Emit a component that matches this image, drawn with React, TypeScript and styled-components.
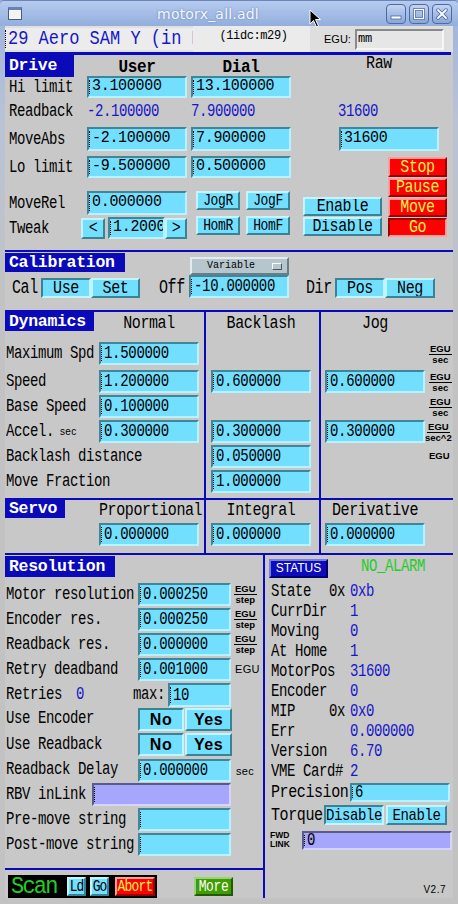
import React from "react";
import styled, { createGlobalStyle } from "styled-components";

const MONO = `"Liberation Mono", "DejaVu Sans Mono", monospace`;
const SANS = `"Liberation Sans", "DejaVu Sans", sans-serif`;
const BG = "#c8c8c8";
const CYAN = "#73dfff";
const BLUE = "#0a0ab8";
const TEXTBLUE = "#1616c8";

const GlobalStyle = createGlobalStyle`
  html, body { margin: 0; padding: 0; background: ${BG}; }
  body { width: 458px; height: 904px; overflow: hidden; }
`;

const Window = styled.div`
  width: 458px;
  height: 904px;
  display: flex;
  flex-direction: column;
  overflow: hidden;
  background: linear-gradient(to bottom, #9cb3de 0px, #b9c3d6 120px, #c2c2c2 300px);
  font-family: ${MONO};
`;

const TitleBar = styled.div`
  position: relative;
  height: 26px;
  flex: none;
  display: flex;
  align-items: center;
  box-sizing: border-box;
  border-top: 1px solid #6c86b8;
  border-radius: 4px 4px 0 0;
  background: linear-gradient(to bottom, #b6cbef, #93aedd);
`;

const WinIcon = styled.div`
  width: 12px;
  height: 9px;
  margin-left: 8px;
  flex: none;
  background: #f4f4f4;
  border: 1px solid #4a5c80;
  border-top-width: 3px;
  border-top-color: #6a82b4;
`;

const Title = styled.div`
  flex: 1;
  padding-left: 8px;
  text-align: center;
  color: #f6f8ff;
  font: 14px "DejaVu Sans", ${SANS};
  text-shadow: 0 0 2px #5a76aa;
  letter-spacing: 0.2px;
`;

const TitleButtons = styled.div`
  display: flex;
  gap: 3px;
  margin-right: 6px;
`;

const TitleBtn = styled.div`
  width: 18px;
  height: 18px;
  border: 1px solid #4f6aa0;
  border-radius: 4px;
  background: linear-gradient(to bottom, #c4d4f2, #8aa6d8);
  display: flex;
  align-items: center;
  justify-content: center;
`;

const Cursor = styled.svg`
  position: absolute;
  left: 309px;
  top: 8px;
`;

const Body = styled.div`
  flex: 1;
  display: flex;
  padding: 0 5px 6px 5px;
`;

const Content = styled.div`
  flex: 1;
  display: flex;
  flex-direction: column;
  background: ${BG};
  overflow: hidden;
`;

/* ---------- generic parts ---------- */

const Stretch = styled.span<{ sy: number }>`
  display: inline-block;
  transform: scaleY(${(p) => p.sy});
`;

const Rule = styled.div<{ h: number; mr?: number }>`
  height: ${(p) => p.h}px;
  margin-right: ${(p) => p.mr ?? 0}px;
  background: ${BLUE};
  flex: none;
`;

const Row = styled.div<{ h: number; align?: string; mt?: number }>`
  display: flex;
  align-items: ${(p) => p.align ?? "center"};
  height: ${(p) => p.h}px;
  margin-top: ${(p) => p.mt ?? 0}px;
  flex: none;
`;

const Label = styled.div<{ w?: number; pl?: number; ml?: number; fs?: number; sy?: number }>`
  width: ${(p) => (p.w ? `${p.w}px` : "auto")};
  padding-left: ${(p) => p.pl ?? 0}px;
  margin-left: ${(p) => p.ml ?? 0}px;
  box-sizing: border-box;
  flex: none;
  font-family: ${MONO};
  font-size: ${(p) => p.fs ?? 14}px;
  letter-spacing: -0.4px;
  white-space: nowrap;
  color: #000;
  transform: scaleY(${(p) => p.sy ?? 1.3});
`;

const Value = styled(Label)`
  color: ${TEXTBLUE};
`;

const Tag = styled.div<{ w: number; h: number; mt?: number }>`
  width: ${(p) => p.w}px;
  height: ${(p) => p.h}px;
  margin-top: ${(p) => p.mt ?? 0}px;
  flex: none;
  box-sizing: border-box;
  padding-left: 4px;
  background: ${BLUE};
  color: #fff;
  font: bold 16.5px ${MONO};
  line-height: ${(p) => p.h}px;
  letter-spacing: -0.3px;
  position: relative;
  z-index: 1;
`;

const ColHead = styled.div<{ w: number; ml?: number; bold?: boolean; pt?: number }>`
  width: ${(p) => p.w}px;
  margin-left: ${(p) => p.ml ?? 0}px;
  padding-top: ${(p) => p.pt ?? 0}px;
  flex: none;
  text-align: center;
  font-family: ${MONO};
  font-size: ${(p) => (p.bold ? 16 : 15)}px;
  font-weight: ${(p) => (p.bold ? "bold" : "normal")};
  letter-spacing: -0.4px;
  white-space: nowrap;
  transform: scaleY(${(p) => (p.bold ? 1.1 : 1.25)});
`;

type FieldProps = {
  w: number;
  h?: number;
  fs?: number;
  purple?: boolean;
  ml?: number;
  mt?: number;
};

const FieldBox = styled.div<FieldProps>`
  position: relative;
  box-sizing: border-box;
  width: ${(p) => p.w}px;
  height: ${(p) => p.h ?? 23}px;
  margin-left: ${(p) => p.ml ?? 0}px;
  margin-top: ${(p) => p.mt ?? 0}px;
  flex: none;
  background: ${(p) => (p.purple ? "#a6a6fc" : CYAN)};
  border-style: solid;
  border-width: 2px;
  border-color: ${(p) =>
    p.purple
      ? "#5a5a8e #d4d4ff #d4d4ff #5a5a8e"
      : "#3e8698 #b8f1ff #b8f1ff #3e8698"};
  font-family: ${MONO};
  font-size: ${(p) => p.fs ?? 14}px;
  letter-spacing: -0.3px;
  line-height: ${(p) => (p.h ?? 23) - 4}px;
  padding-left: 3px;
  color: #000;
  white-space: nowrap;
  overflow: hidden;
  &::before {
    content: "";
    position: absolute;
    left: 0;
    top: 2px;
    bottom: 2px;
    border-left: 1px dotted #000;
  }
`;

const Field = ({
  children,
  sy = 1.28,
  ...rest
}: FieldProps & { children?: React.ReactNode; sy?: number }) => (
  <FieldBox {...rest}>
    <Stretch sy={sy}>{children}</Stretch>
  </FieldBox>
);

type Tone = "cyan" | "red" | "green";
const tones: Record<Tone, { bg: string; light: string; dark: string; fg: string }> = {
  cyan: { bg: CYAN, light: "#c2f5ff", dark: "#3a8296", fg: "#000" },
  red: { bg: "#fd0000", light: "#ff9c9c", dark: "#9c0000", fg: "#fbf34a" },
  green: { bg: "#3f9d00", light: "#98d37a", dark: "#215a00", fg: "#fff" },
};

type BtnProps = {
  w: number;
  h: number;
  tone?: Tone;
  pressed?: boolean;
  ml?: number;
  mt?: number;
  fs?: number;
  heavy?: boolean;
  ls?: number;
};

const BtnBox = styled.div<BtnProps>`
  width: ${(p) => p.w}px;
  height: ${(p) => p.h}px;
  margin-left: ${(p) => p.ml ?? 0}px;
  margin-top: ${(p) => p.mt ?? 0}px;
  flex: none;
  box-sizing: border-box;
  display: flex;
  align-items: center;
  justify-content: center;
  background: ${(p) => tones[p.tone ?? "cyan"].bg};
  color: ${(p) => tones[p.tone ?? "cyan"].fg};
  border: 2px solid;
  border-color: ${(p) => {
    const t = tones[p.tone ?? "cyan"];
    return p.pressed
      ? `${t.dark} ${t.light} ${t.light} ${t.dark}`
      : `${t.light} ${t.dark} ${t.dark} ${t.light}`;
  }};
  font-family: ${(p) => (p.heavy ? SANS : MONO)};
  font-weight: ${(p) => (p.heavy ? "bold" : "normal")};
  font-size: ${(p) => p.fs ?? 14}px;
  letter-spacing: ${(p) => (p.ls !== undefined ? `${p.ls}px` : p.heavy ? "0.5px" : "-0.4px")};
  white-space: nowrap;
  overflow: hidden;
`;

const Btn = ({ children, ...rest }: BtnProps & { children?: React.ReactNode }) => (
  <BtnBox {...rest}>
    <Stretch sy={rest.heavy ? 1 : 1.2}>{children}</Stretch>
  </BtnBox>
);

const Frac = styled.div<{ ml?: number; mt?: number }>`
  display: inline-flex;
  flex-direction: column;
  align-items: center;
  margin-left: ${(p) => p.ml ?? 0}px;
  margin-top: ${(p) => p.mt ?? 0}px;
  font: bold 9.5px ${SANS};
  line-height: 8px;
  flex: none;
`;

const FracTop = styled.span`
  border-bottom: 1px solid #000;
  padding: 0 1px 1px;
  margin-bottom: 1px;
`;

const Small = styled.span<{ ml?: number }>`
  margin-left: ${(p) => p.ml ?? 0}px;
  font: 10px ${SANS};
  letter-spacing: 0.3px;
  display: inline-block;
  transform: scaleY(0.8);
`;

const UnitText = styled.span<{ ml?: number; mt?: number }>`
  margin-left: ${(p) => p.ml ?? 0}px;
  margin-top: ${(p) => p.mt ?? 0}px;
  font: 11px ${SANS};
  letter-spacing: 0.3px;
  flex: none;
`;

const Unit = ({ top, bottom, ml, mt }: { top: string; bottom: string; ml?: number; mt?: number }) => (
  <Frac ml={ml} mt={mt}>
    <FracTop>{top}</FracTop>
    <span>{bottom}</span>
  </Frac>
);

/* ---------- top row ---------- */

const TopRow = styled.div`
  height: 26px;
  flex: none;
  display: flex;
  background: #e0e0e0;
`;

const NameField = styled.div`
  position: relative;
  width: 188px;
  height: 22px;
  margin-top: 2px;
  box-sizing: border-box;
  padding-left: 3px;
  background: #ececec;
  color: ${TEXTBLUE};
  font: 17px ${MONO};
  line-height: 22px;
  white-space: pre;
  overflow: hidden;
  &::before {
    content: "";
    position: absolute;
    left: 0;
    top: 2px;
    bottom: 2px;
    border-left: 1px dotted #000;
  }
`;

const PvBox = styled.div`
  width: 117px;
  background: #ebebeb;
  text-align: center;
  padding-top: 3px;
  padding-left: 4px;
  font: 12px ${MONO};
  letter-spacing: -0.4px;
  box-sizing: border-box;
`;

const EguBox = styled.div`
  flex: 1;
  display: flex;
  align-items: center;
  background: #dedede;
  padding-left: 14px;
  font: 11px ${SANS};
`;

const EguField = styled.div`
  width: 89px;
  height: 21px;
  margin-left: 4px;
  box-sizing: border-box;
  border: 2px solid;
  border-color: #8a8a8a #f6f6f6 #f6f6f6 #8a8a8a;
  background: #e6e6e6;
  font: 12px ${MONO};
  line-height: 17px;
  padding-left: 1px;
`;

/* ---------- drive ---------- */

const Section = styled.div<{ h: number }>`
  height: ${(p) => p.h}px;
  flex: none;
  display: flex;
  flex-direction: column;
`;

const Split = styled.div`
  display: flex;
  align-items: flex-start;
`;

const Stack = styled.div<{ w?: number; ml?: number; mt?: number; gap?: number }>`
  display: flex;
  flex-direction: column;
  width: ${(p) => (p.w ? `${p.w}px` : "auto")};
  margin-left: ${(p) => p.ml ?? 0}px;
  margin-top: ${(p) => p.mt ?? 0}px;
  gap: ${(p) => p.gap ?? 0}px;
  flex: none;
`;

const JogGrid = styled.div`
  display: grid;
  grid-template-columns: 44px 44px;
  grid-auto-rows: 19px;
  column-gap: 6px;
  row-gap: 6px;
  margin-left: 6px;
  margin-top: 11px;
`;

const Menu = styled.div`
  position: relative;
  width: 99px;
  height: 18px;
  margin-top: 5px;
  margin-left: 65px;
  box-sizing: border-box;
  background: #b6c6cc;
  border: 2px solid;
  border-color: #e2ecf0 #6a7c84 #6a7c84 #e2ecf0;
  font: 10px ${MONO};
  line-height: 14px;
  padding-left: 15px;
`;

const MenuMark = styled.span`
  position: absolute;
  right: 5px;
  top: 4px;
  width: 8px;
  height: 5px;
  background: #b6c6cc;
  border: 1px solid;
  border-color: #ffffff #4c5a60 #4c5a60 #ffffff;
`;

/* ---------- dynamics / servo ---------- */

const Grid3 = styled.div`
  height: 241px;
  flex: none;
  display: flex;
`;

const Col = styled.div<{ w?: number; line?: boolean }>`
  width: ${(p) => (p.w ? `${p.w}px` : "auto")};
  flex: ${(p) => (p.w ? "none" : "1")};
  min-width: 0;
  display: flex;
  flex-direction: column;
  border-left: ${(p) => (p.line ? `2px solid ${BLUE}` : "none")};
`;

const Cell = styled.div<{ h: number; pl?: number }>`
  height: ${(p) => p.h}px;
  flex: none;
  display: flex;
  align-items: flex-start;
  padding-left: ${(p) => p.pl ?? 0}px;
`;

const ServoPart = styled.div`
  border-top: 2px solid ${BLUE};
  height: 53px;
  display: flex;
  flex-direction: column;
`;

/* ---------- lower ---------- */

const Lower = styled.div`
  flex: 1;
  display: flex;
  min-height: 0;
`;

const LeftPanel = styled.div`
  width: 258px;
  flex: none;
  display: flex;
  flex-direction: column;
  border-right: 2px solid ${BLUE};
`;

const RightPanel = styled.div`
  flex: 1;
  min-width: 0;
  display: flex;
  flex-direction: column;
  padding-left: 4px;
  padding-bottom: 3px;
`;

const StatusBtn = styled.div`
  width: 59px;
  height: 19px;
  margin-top: 4px;
  box-sizing: border-box;
  background: #0c0cbc;
  border: 2px solid;
  border-color: #7a7ae8 #00006a #00006a #7a7ae8;
  color: #fff;
  font: 12px ${SANS};
  text-align: center;
  line-height: 15px;
`;

const Alarm = styled.div`
  margin-left: 33px;
  margin-top: 3px;
  color: #24cc24;
  font: 14px ${MONO};
  letter-spacing: -0.4px;
  transform: scaleY(1.25);
`;

const StatRow = styled.div`
  height: 20px;
  display: flex;
  align-items: center;
  padding-left: 2px;
`;

const TinyTwoLine = styled.div`
  width: 32px;
  font: bold 8.5px ${SANS};
  line-height: 9px;
  padding-left: 1px;
  flex: none;
`;

const Version = styled.div`
  margin-top: auto;
  margin-right: 7px;
  align-self: flex-end;
  font: 10px ${SANS};
  letter-spacing: 0.5px;
`;

const ScanBox = styled.div`
  width: 149px;
  height: 23px;
  margin-left: 3px;
  margin-top: 5px;
  background: #000;
  display: flex;
  align-items: center;
`;

const ScanText = styled.span`
  display: inline-block;
  color: #1fd11f;
  font: 22px ${MONO};
  line-height: 23px;
  height: 23px;
  letter-spacing: -1.8px;
  margin-left: 3px;
  width: 56px;
  flex: none;
  transform: scaleY(1.12);
`;

/* ---------- data ---------- */

const dynRows: {
  label: React.ReactNode;
  h: number;
  normal?: string;
  backlash?: string;
  jog?: string;
  unit?: React.ReactNode;
}[] = [
  { label: "Maximum Spd", h: 28, normal: "1.500000", unit: <Unit top="EGU" bottom="sec" ml={4} mt={3} /> },
  { label: "Speed", h: 25, normal: "1.200000", backlash: "0.600000", jog: "0.600000", unit: <Unit top="EGU" bottom="sec" ml={4} mt={3} /> },
  { label: "Base Speed", h: 25, normal: "0.100000", unit: <Unit top="EGU" bottom="sec" ml={4} mt={3} /> },
  {
    label: (
      <>
        Accel.<Small ml={6}>sec</Small>
      </>
    ),
    h: 25,
    normal: "0.300000",
    backlash: "0.300000",
    jog: "0.300000",
    unit: <Unit top="EGU" bottom="sec^2" ml={0} mt={3} />,
  },
  { label: "Backlash distance", h: 25, backlash: "0.050000", unit: <Frac ml={4} mt={7}>EGU</Frac> },
  { label: "Move Fraction", h: 25, backlash: "1.000000" },
];

const statRows: [string, string, string?][] = [
  ["State", "0xb", "0x"],
  ["CurrDir", "1"],
  ["Moving", "0"],
  ["At Home", "1"],
  ["MotorPos", "31600"],
  ["Encoder", "0"],
  ["MIP", "0x0", "0x"],
  ["Err", "0.000000"],
  ["Version", "6.70"],
  ["VME Card#", "2"],
];

export default function App() {
  return (
    <>
      <GlobalStyle />
      <Window>
        <TitleBar>
          <WinIcon />
          <Title>motorx_all.adl</Title>
          <TitleButtons>
            <TitleBtn>
              <svg width="12" height="12" viewBox="0 0 12 12">
                <rect x="1" y="8" width="10" height="3" fill="#fff" stroke="#4a64a0" strokeWidth="0.8" />
              </svg>
            </TitleBtn>
            <TitleBtn>
              <svg width="12" height="12" viewBox="0 0 12 12">
                <rect x="1.5" y="1.5" width="9" height="9" fill="none" stroke="#4a64a0" strokeWidth="2.6" />
                <rect x="1.5" y="1.5" width="9" height="9" fill="none" stroke="#fff" strokeWidth="1.2" />
              </svg>
            </TitleBtn>
            <TitleBtn>
              <svg width="12" height="12" viewBox="0 0 12 12">
                <path d="M2 2 L10 10 M10 2 L2 10" stroke="#4a64a0" strokeWidth="3.4" strokeLinecap="round" />
                <path d="M2 2 L10 10 M10 2 L2 10" stroke="#fff" strokeWidth="1.8" strokeLinecap="round" />
              </svg>
            </TitleBtn>
          </TitleButtons>
          <Cursor width="14" height="20" viewBox="0 0 14 20">
            <path d="M1 1 L1 15 L4.5 11.5 L7.5 18 L9.5 17 L6.5 10.5 L11.5 10.5 Z" fill="#000" stroke="#fff" strokeWidth="1" />
          </Cursor>
        </TitleBar>

        <Body>
          <Content>
            <TopRow>
              <NameField>
                <Stretch sy={1.15}>29 Aero SAM Y (in M</Stretch>
              </NameField>
              <PvBox>(1idc:m29)</PvBox>
              <EguBox>
                EGU:
                <EguField>mm</EguField>
              </EguBox>
            </TopRow>
            <Rule h={3} mr={2} />

            {/* Drive */}
            <Section h={195}>
              <Row h={20} align="flex-start">
                <Tag w={69} h={22}>Drive</Tag>
                <ColHead w={100} ml={13} bold pt={3}>User</ColHead>
                <ColHead w={100} ml={4} bold pt={3}>Dial</ColHead>
                <ColHead w={80} ml={48} pt={0}>Raw</ColHead>
              </Row>
              <Row h={23}>
                <Label w={82} pl={4}>Hi limit</Label>
                <Field w={100} h={22} fs={15} sy={1.12}>3.100000</Field>
                <Field w={100} h={22} fs={15} sy={1.12} ml={4}>13.100000</Field>
              </Row>
              <Row h={26}>
                <Label w={82} pl={4}>Readback</Label>
                <Value w={104}>-2.100000</Value>
                <Value w={147}>7.900000</Value>
                <Value>31600</Value>
              </Row>
              <Row h={30}>
                <Label w={82} pl={4}>MoveAbs</Label>
                <Field w={100} h={24} fs={15} sy={1.12}>-2.100000</Field>
                <Field w={100} h={24} fs={15} sy={1.12} ml={4}>7.900000</Field>
                <Field w={100} h={24} fs={15} sy={1.12} ml={48}>31600</Field>
              </Row>
              <Split>
                <Stack w={383}>
                  <Row h={26}>
                    <Label w={82} pl={4}>Lo limit</Label>
                    <Field w={100} h={22} fs={15} sy={1.12}>-9.500000</Field>
                    <Field w={100} h={22} fs={15} sy={1.12} ml={4}>0.500000</Field>
                  </Row>
                  <Split>
                    <Stack w={185} mt={9}>
                      <Row h={27} align="flex-start">
                        <Label w={82} pl={4} style={{ marginTop: 6 }}>MoveRel</Label>
                        <Field w={100} h={24} fs={15} sy={1.12} mt={2}>0.000000</Field>
                      </Row>
                      <Row h={24} align="flex-start">
                        <Label w={76} pl={4} style={{ marginTop: 4 }}>Tweak</Label>
                        <Btn w={24} h={21} mt={2} fs={15}>&lt;</Btn>
                        <Field w={57} h={22} fs={15} sy={1.12} mt={1} ml={3}>1.2000</Field>
                        <Btn w={22} h={21} mt={2} fs={15}>&gt;</Btn>
                      </Row>
                    </Stack>
                    <JogGrid>
                      <Btn w={44} h={19} fs={13}>JogR</Btn>
                      <Btn w={44} h={19} fs={13}>JogF</Btn>
                      <Btn w={44} h={19} fs={13}>HomR</Btn>
                      <Btn w={44} h={19} fs={13}>HomF</Btn>
                    </JogGrid>
                    <Stack ml={13} mt={17} gap={1}>
                      <Btn w={79} h={19} fs={15}>Enable</Btn>
                      <Btn w={79} h={19} fs={15}>Disable</Btn>
                    </Stack>
                  </Split>
                </Stack>
                <Stack mt={3} gap={1}>
                  <Btn w={59} h={20} tone="red" fs={15}>Stop</Btn>
                  <Btn w={59} h={19} tone="red" fs={15}>Pause</Btn>
                  <Btn w={59} h={19} tone="red" fs={15}>Move</Btn>
                  <Btn w={59} h={19} tone="red" fs={15} pressed>Go</Btn>
                </Stack>
              </Split>
            </Section>
            <Rule h={2} />

            {/* Calibration */}
            <Section h={58}>
              <Row h={23} align="flex-start">
                <Tag w={120} h={19} mt={1}>Calibration</Tag>
                <Menu>
                  Variable
                  <MenuMark />
                </Menu>
              </Row>
              <Row h={24} align="flex-start">
                <Label w={36} pl={7} fs={15} style={{ marginTop: 5 }}>Cal</Label>
                <Btn w={50} h={20} mt={3} fs={15} pressed>Use</Btn>
                <Btn w={49} h={20} mt={3} fs={15}>Set</Btn>
                <Label w={30} ml={19} fs={15} style={{ marginTop: 5 }}>Off</Label>
                <Field w={100} h={23} fs={14} sy={1.35}>-10.000000</Field>
                <Label w={29} ml={17} fs={15} style={{ marginTop: 5 }}>Dir</Label>
                <Btn w={50} h={20} mt={3} fs={15} pressed>Pos</Btn>
                <Btn w={50} h={20} mt={3} fs={15}>Neg</Btn>
              </Row>
            </Section>
            <Rule h={2} />

            {/* Dynamics + Servo */}
            <Grid3>
              <Col w={199}>
                <Cell h={30}>
                  <Tag w={89} h={19}>Dynamics</Tag>
                  <ColHead w={100} ml={5} pt={3}>Normal</ColHead>
                </Cell>
                {dynRows.map((r, i) => (
                  <Cell key={i} h={r.h}>
                    <Label w={94} pl={1} style={{ marginTop: 3 }}>{r.label}</Label>
                    {r.normal && <Field w={100}>{r.normal}</Field>}
                  </Cell>
                ))}
                <Cell h={3} />
                <ServoPart>
                  <Cell h={23}>
                    <Tag w={60} h={18}>Servo</Tag>
                    <ColHead w={100} ml={34} pt={2}>Proportional</ColHead>
                  </Cell>
                  <Cell h={23} pl={94}>
                    <Field w={100}>0.000000</Field>
                  </Cell>
                </ServoPart>
              </Col>
              <Col w={113} line>
                <Cell h={30}>
                  <ColHead w={100} ml={5} pt={3}>Backlash</ColHead>
                </Cell>
                {dynRows.map((r, i) => (
                  <Cell key={i} h={r.h} pl={5}>
                    {r.backlash && <Field w={100}>{r.backlash}</Field>}
                  </Cell>
                ))}
                <Cell h={3} />
                <ServoPart>
                  <Cell h={23}>
                    <ColHead w={100} ml={5} pt={2}>Integral</ColHead>
                  </Cell>
                  <Cell h={23} pl={5}>
                    <Field w={100}>0.000000</Field>
                  </Cell>
                </ServoPart>
              </Col>
              <Col line>
                <Cell h={30}>
                  <ColHead w={100} ml={4} pt={3}>Jog</ColHead>
                </Cell>
                {dynRows.map((r, i) => (
                  <Cell key={i} h={r.h} pl={r.jog ? 4 : 104}>
                    {r.jog && <Field w={100}>{r.jog}</Field>}
                    {r.unit}
                  </Cell>
                ))}
                <Cell h={3} />
                <ServoPart>
                  <Cell h={23}>
                    <ColHead w={100} ml={4} pt={2}>Derivative</ColHead>
                  </Cell>
                  <Cell h={23} pl={4}>
                    <Field w={100}>0.000000</Field>
                  </Cell>
                </ServoPart>
              </Col>
            </Grid3>
            <Rule h={2} />

            {/* Resolution + Status */}
            <Lower>
              <LeftPanel>
                <Row h={28} align="flex-start">
                  <Tag w={110} h={21} mt={1}>Resolution</Tag>
                </Row>
                <Row h={25} align="flex-start">
                  <Label w={133} pl={1} style={{ marginTop: 3 }}>Motor resolution</Label>
                  <Field w={93}>0.000250</Field>
                  <Unit top="EGU" bottom="step" ml={3} mt={2} />
                </Row>
                <Row h={25} align="flex-start">
                  <Label w={133} pl={1} style={{ marginTop: 3 }}>Encoder res.</Label>
                  <Field w={93}>0.000250</Field>
                  <Unit top="EGU" bottom="step" ml={3} mt={2} />
                </Row>
                <Row h={25} align="flex-start">
                  <Label w={133} pl={1} style={{ marginTop: 3 }}>Readback res.</Label>
                  <Field w={93}>0.000000</Field>
                  <Unit top="EGU" bottom="step" ml={3} mt={2} />
                </Row>
                <Row h={25} align="flex-start">
                  <Label w={133} pl={1} style={{ marginTop: 3 }}>Retry deadband</Label>
                  <Field w={93}>0.001000</Field>
                  <UnitText ml={4} mt={5}>EGU</UnitText>
                </Row>
                <Row h={25} align="flex-start">
                  <Label w={71} pl={1} style={{ marginTop: 3 }}>Retries</Label>
                  <Value w={57} style={{ marginTop: 3 }}>0</Value>
                  <Label w={35} style={{ marginTop: 3 }}>max:</Label>
                  <Field w={63} h={24}>10</Field>
                </Row>
                <Row h={25} align="flex-start">
                  <Label w={133} pl={1} style={{ marginTop: 2 }}>Use Encoder</Label>
                  <Btn w={46} h={23} heavy fs={16} pressed>No</Btn>
                  <Btn w={47} h={23} heavy fs={16} ml={1}>Yes</Btn>
                </Row>
                <Row h={25} align="flex-start">
                  <Label w={133} pl={1} style={{ marginTop: 3 }}>Use Readback</Label>
                  <Btn w={46} h={23} heavy fs={16} pressed>No</Btn>
                  <Btn w={47} h={23} heavy fs={16} ml={1}>Yes</Btn>
                </Row>
                <Row h={25} align="flex-start">
                  <Label w={133} pl={1} style={{ marginTop: 3 }}>Readback Delay</Label>
                  <Field w={93} mt={1}>0.000000</Field>
                  <UnitText ml={5} mt={7}>sec</UnitText>
                </Row>
                <Row h={25} align="flex-start">
                  <Label w={87} pl={1} style={{ marginTop: 3 }}>RBV inLink</Label>
                  <Field w={139} purple />
                </Row>
                <Row h={25} align="flex-start">
                  <Label w={133} pl={1} style={{ marginTop: 3 }}>Pre-move string</Label>
                  <Field w={93} />
                </Row>
                <Row h={25} align="flex-start">
                  <Label w={133} pl={1} style={{ marginTop: 3 }}>Post-move string</Label>
                  <Field w={93} />
                </Row>
                <Row h={10} />
                <Rule h={2} />
                <Row h={28} align="flex-start">
                  <ScanBox>
                    <ScanText>Scan</ScanText>
                    <Btn w={19} h={19} fs={13} ls={-1}>Ld</Btn>
                    <Btn w={19} h={19} fs={13} ls={-1} ml={4}>Go</Btn>
                    <Btn w={40} h={19} fs={13} ml={6} tone="red" ls={-0.8}>Abort</Btn>
                  </ScanBox>
                  <Btn w={39} h={19} fs={13} ml={37} mt={7} tone="green">More</Btn>
                </Row>
              </LeftPanel>

              <RightPanel>
                <Row h={26} align="flex-start">
                  <StatusBtn>STATUS</StatusBtn>
                  <Alarm>NO_ALARM</Alarm>
                </Row>
                {statRows.map(([k, v, hex]) => (
                  <StatRow key={k}>
                    <Label w={58}>{k}</Label>
                    <Label w={21}>{hex ?? ""}</Label>
                    <Value>{v}</Value>
                  </StatRow>
                ))}
                <Row h={22} style={{ paddingLeft: 2 }}>
                  <Label w={79} fs={15} sy={1.25}>Precision</Label>
                  <Field w={100} h={19}>6</Field>
                </Row>
                <Row h={24} style={{ paddingLeft: 2 }}>
                  <Label w={53} fs={15} sy={1.25}>Torque</Label>
                  <Btn w={60} h={20} fs={14} pressed>Disable</Btn>
                  <Btn w={61} h={20} fs={14} ml={2}>Enable</Btn>
                </Row>
                <Row h={26} align="flex-start" style={{ paddingTop: 4 }}>
                  <TinyTwoLine>
                    FWD
                    <br />
                    LINK
                  </TinyTwoLine>
                  <Field w={150} h={19} purple>0</Field>
                </Row>
                <Version>V2.7</Version>
              </RightPanel>
            </Lower>
          </Content>
        </Body>
      </Window>
    </>
  );
}
